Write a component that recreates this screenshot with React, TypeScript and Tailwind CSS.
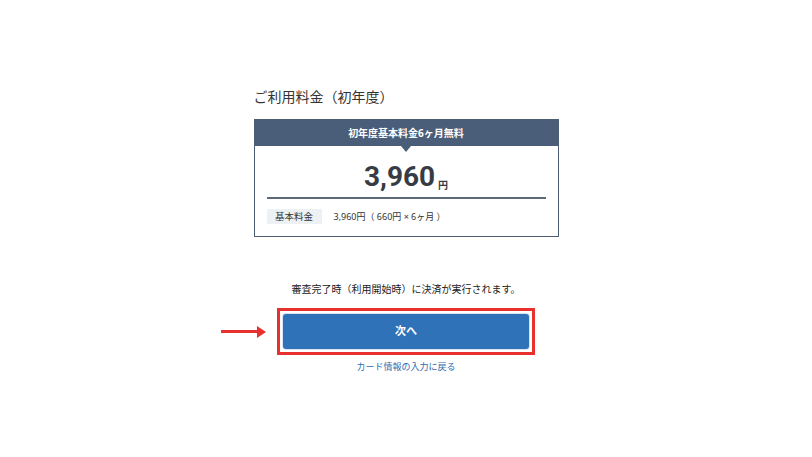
const jp = { fontFamily: '"Noto Sans", "Noto Sans CJK JP", sans-serif' };

export default function App() {
  return (
    <div className="min-h-[457px] w-full bg-white text-[#333]" style={jp}>
      <div className="mx-auto flex w-[305px] flex-col pt-[86px]">
        <h2 className="text-[14px] leading-[22px] text-[#333]">ご利用料金（初年度）</h2>

        {/* Price card */}
        <div className="mt-[11px] border border-[#4d5d73]">
          <div className="relative flex h-[26px] items-center justify-center bg-[#4b5e79]">
            <span className="text-[10px] font-bold leading-none text-white">初年度基本料金6ヶ月無料</span>
            <span className="absolute left-1/2 top-full h-0 w-0 -translate-x-1/2 border-x-[5px] border-t-[6px] border-x-transparent border-t-[#4b5e79]" />
          </div>
          <div className="px-[12px] pb-[12px]">
            <div className="flex h-[53px] items-end justify-center border-b-2 border-[#5d6878] pb-[6px]">
              <span
                className="text-[28px] font-bold leading-none text-[#363b44]"
                style={{ fontFamily: 'Roboto, "Noto Sans", sans-serif' }}
              >
                3,960
              </span>
              <span className="mb-[1px] ml-[3px] text-[10px] font-bold leading-none text-[#363b44]">円</span>
            </div>
            <div className="mt-[10px] flex items-center">
              <span className="flex h-[15px] w-[55px] items-center justify-center bg-[#eef1f4] text-[9.5px] leading-none text-[#333]">
                基本料金
              </span>
              <span className="ml-[12px] text-[9px] leading-none text-[#333]">3,960円（ 660円 × 6ヶ月 ）</span>
            </div>
          </div>
        </div>

        <p className="mt-[45px] text-center text-[10px] leading-[14px] text-[#222]">
          審査完了時（利用開始時）に決済が実行されます。
        </p>

        {/* Button highlighted with annotation */}
        <div className="relative mx-auto mt-[12px] w-[258px] border-[3px] border-[#e8312f] p-[3px]">
          <div className="absolute right-full top-1/2 mr-[14px] flex -translate-y-1/2 items-center">
            <span className="h-[3px] w-[36px] bg-[#e8312f]" />
            <span className="h-0 w-0 border-y-[6px] border-l-[9px] border-y-transparent border-l-[#e8312f]" />
          </div>
          <button className="flex h-[35px] w-full items-center justify-center rounded-[3px] bg-[#2f72b8] text-[11px] font-bold text-white shadow-[0_0_0_1px_#d9e4f0]">
            次へ
          </button>
        </div>

        <a className="mt-[5px] text-center text-[9px] leading-[14px] text-[#2d6cae]">カード情報の入力に戻る</a>
      </div>
    </div>
  );
}
